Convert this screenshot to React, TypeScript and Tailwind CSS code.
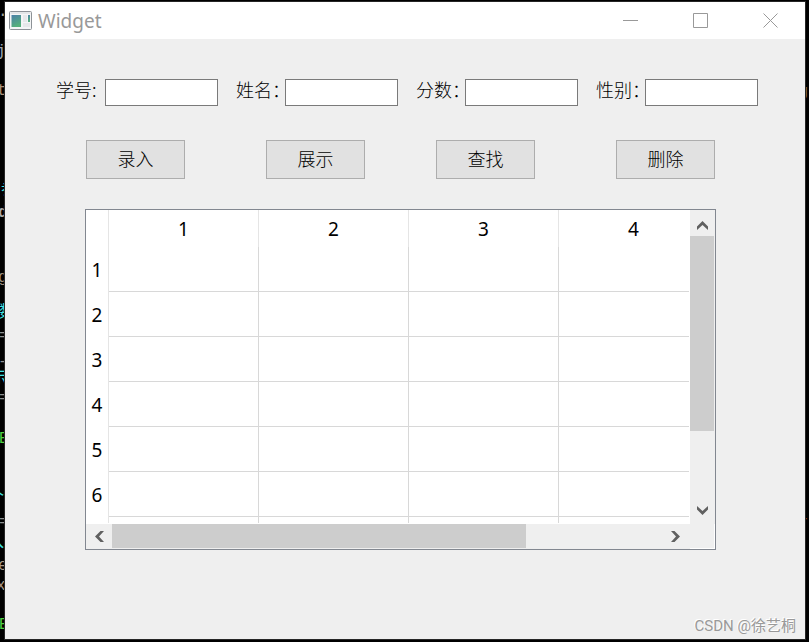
import type { ReactNode } from "react";

const FIELDS = [
  { id: "student-no", label: "学号:" },
  { id: "name", label: "姓名：" },
  { id: "score", label: "分数：" },
  { id: "gender", label: "性别：" },
];

const ACTIONS = ["录入", "展示", "查找", "删除"];

const COLUMNS = ["1", "2", "3", "4"];
const ROWS = ["1", "2", "3", "4", "5", "6", ""];

// Pieces of the editor that is open behind the window
const EDITOR_GLYPHS = [
  { text: ".", place: "left-[-2px] top-[2px]", color: "text-[#a0a0a0]" },
  { text: "j", place: "left-[-4px] top-[42px]", color: "text-[#9aa4b4]" },
  { text: "t", place: "left-[-3px] top-[81px]", color: "text-[#a89078]" },
  { text: "参", place: "left-[1px] top-[180px]", color: "text-[#40e0e0]" },
  { text: "d", place: "left-[-2px] top-[203px] font-bold", color: "text-[#a8a8a8]" },
  { text: "g", place: "left-[-2px] top-[268px]", color: "text-[#9c8c7c]" },
  { text: "数", place: "left-[-1px] top-[303px]", color: "text-[#40e0e0]" },
  { text: "=", place: "left-[-1px] top-[326px]", color: "text-[#909090]" },
  { text: "-", place: "left-[-2px] top-[352px]", color: "text-[#909090]" },
  { text: "示", place: "left-[-9px] top-[369px]", color: "text-[#40e0e0]" },
  { text: "=", place: "left-[-1px] top-[388px]", color: "text-[#909090]" },
  { text: "E", place: "left-[-1px] top-[429px]", color: "text-[#4fd040]" },
  { text: "个", place: "left-[-12px] top-[488px]", color: "text-[#40e0e0]" },
  { text: "=", place: "left-[-1px] top-[512px]", color: "text-[#909090]" },
  { text: "入", place: "left-[-12px] top-[533px]", color: "text-[#40e0e0]" },
  { text: "e", place: "left-[-2px] top-[556px]", color: "text-[#a89888]" },
  { text: "x", place: "left-[-4px] top-[576px]", color: "text-[#a89888]" },
  { text: "E", place: "left-[-1px] top-[615px]", color: "text-[#4fd040]" },
  { text: "g", place: "right-[1px] top-[82px]", color: "text-[#807468]" },
  { text: "r", place: "right-[1px] top-[513px]", color: "text-[#8a4a28]" },
];

export default function App() {
  return (
    <div className="relative flex min-h-screen flex-col overflow-hidden bg-black pb-[3px] pl-[5px] pr-[4px] pt-[2px]">
      <EditorBackdrop />
      <main className="relative flex flex-1 flex-col bg-[#efefef] font-['Noto_Sans','Noto_Sans_CJK_SC',sans-serif] text-black outline outline-[#262626]">
        <TitleBar />
        <EntryForm />
        <ScoreTable />
        <p className="absolute bottom-px right-[9px] font-['Roboto','Noto_Sans_CJK_SC',sans-serif] text-[15px] leading-[24px] text-[#999999] [text-shadow:-1px_-1px_0_#ffffff]">
          CSDN @徐艺桐
        </p>
      </main>
    </div>
  );
}

function EditorBackdrop() {
  return (
    <div
      aria-hidden="true"
      className="absolute inset-0 overflow-hidden font-['Liberation_Mono','Noto_Sans_CJK_SC',monospace] text-[16px] leading-[20px]"
    >
      {EDITOR_GLYPHS.map((glyph) => (
        <span key={glyph.place} className={`absolute ${glyph.place} ${glyph.color}`}>
          {glyph.text}
        </span>
      ))}
    </div>
  );
}

function TitleBar() {
  return (
    <header className="flex h-[37px] items-center bg-white pl-1 text-[#999999]">
      <AppIcon />
      <h1 className="ml-[6px] flex-1 text-[19px] leading-[36px]">Widget</h1>
      <CaptionButton label="Minimize">
        <path d="M0 7.5h15" />
      </CaptionButton>
      <CaptionButton label="Maximize">
        <path d="M.5.5h14v14H.5z" />
      </CaptionButton>
      <CaptionButton label="Close">
        <path d="M.5.5l14 14M14.5.5l-14 14" />
      </CaptionButton>
    </header>
  );
}

function CaptionButton({ label, children }: { label: string; children: ReactNode }) {
  return (
    <button
      type="button"
      aria-label={label}
      className="flex h-full w-[70px] items-center justify-center hover:bg-[#e5e5e5]"
    >
      <svg width="15" height="15" viewBox="0 0 15 15" fill="none" stroke="currentColor">
        {children}
      </svg>
    </button>
  );
}

function AppIcon() {
  return (
    <svg width="23" height="19" viewBox="0 0 23 19" className="shrink-0">
      <defs>
        <linearGradient id="pane" x1="0" y1="0" x2="0.4" y2="1">
          <stop offset="0" stopColor="#4a7fa8" />
          <stop offset="1" stopColor="#55b07c" />
        </linearGradient>
      </defs>
      <rect x=".5" y=".5" width="22" height="18" rx="1" fill="#f4f5f6" stroke="#8d9297" />
      <path d="M1.5 2h20" stroke="#d3d7da" />
      <rect x="2.5" y="4" width="9.5" height="12" fill="url(#pane)" />
      <rect x="14" y="4" width="4" height="7" fill="#e6e8ea" />
      <rect x="14" y="12" width="7" height="4" fill="#e6e8ea" />
      <rect x="19" y="4" width="2" height="7" fill="url(#pane)" />
    </svg>
  );
}

function EntryForm() {
  return (
    <form onSubmit={(event) => event.preventDefault()}>
      <div className="grid grid-cols-4 gap-[18px] pl-[51px] pr-[47px] pt-10">
        {FIELDS.map((field) => (
          <div key={field.id} className="flex items-start">
            <label
              htmlFor={field.id}
              className="w-[49px] shrink-0 whitespace-nowrap font-['Noto_Sans_CJK_SC',sans-serif] text-[18px] font-light leading-5"
            >
              {field.label}
            </label>
            <input
              id={field.id}
              type="text"
              className="relative h-[27px] min-w-0 flex-1 border border-[#7a7a7a] bg-white px-1 text-base outline-none"
            />
          </div>
        ))}
      </div>
      <div className="grid grid-cols-[180fr_170fr_180fr_99px] pl-[81px] pr-[90px] pt-[34px]">
        {ACTIONS.map((action) => (
          <button
            key={action}
            type="button"
            className="h-[39px] w-[99px] border border-[#adadad] bg-[#e1e1e1] pb-0.5 font-['Noto_Sans_CJK_SC',sans-serif] text-[18px] font-light hover:bg-[#e5f1fb]"
          >
            {action}
          </button>
        ))}
      </div>
    </form>
  );
}

function ScoreTable() {
  return (
    <section className="ml-20 mr-[89px] mt-[30px] grid grid-cols-[minmax(0,1fr)_25px] border border-[#828790] bg-[#efefef]">
      <div className="h-[314px] bg-white pb-px pr-px">
        <div className="h-full overflow-hidden">
          <table className="w-[623px] table-fixed border-separate border-spacing-0 text-[19px] leading-6">
            <thead>
              <tr className="h-[37px]">
                <td className="w-[23px] border-r border-[#e5e5e5] p-0" />
                {COLUMNS.map((column) => (
                  <th
                    key={column}
                    scope="col"
                    className="border-r border-[#e5e5e5] p-0 font-normal"
                  >
                    {column}
                  </th>
                ))}
              </tr>
            </thead>
            <tbody>
              {ROWS.map((row, index) => (
                <tr key={index} className="h-[45px]">
                  <th scope="row" className="border-r border-[#e5e5e5] p-0 font-normal">
                    {row}
                  </th>
                  {COLUMNS.map((column) => (
                    <td key={column} className="border-b border-r border-[#d8d8d8] p-0" />
                  ))}
                </tr>
              ))}
            </tbody>
          </table>
        </div>
      </div>

      <div className="flex flex-col">
        <ScrollButton label="Scroll up" size="h-[26px] w-[25px]">
          <path d="M6.5 4L12 9.5V13L6.5 8L1 13V9.5z" />
        </ScrollButton>
        <div className="flex-1">
          <div className="h-[195px] w-6 bg-[#cdcdcd]" />
        </div>
        <ScrollButton label="Scroll down" size="h-[26px] w-[25px]">
          <path d="M6.5 10L12 4.5V1L6.5 6L1 1V4.5z" />
        </ScrollButton>
      </div>

      <div className="flex h-[25px]">
        <ScrollButton label="Scroll left" size="h-[25px] w-[26px]">
          <path d="M2 6.5L7.5 1H11L6 6.5L11 12H7.5z" />
        </ScrollButton>
        <div className="flex-1">
          <div className="h-6 w-3/4 bg-[#cdcdcd]" />
        </div>
        <ScrollButton label="Scroll right" size="h-[25px] w-[26px]">
          <path d="M9 6.5L3.5 1H0L5 6.5L0 12H3.5z" />
        </ScrollButton>
      </div>
      <div className="border-b border-r border-white" />
    </section>
  );
}

function ScrollButton({
  label,
  size,
  children,
}: {
  label: string;
  size: string;
  children: ReactNode;
}) {
  return (
    <button
      type="button"
      aria-label={label}
      className={`flex shrink-0 items-center justify-center text-[#606060] hover:bg-[#dadada] ${size}`}
    >
      <svg width="13" height="13" viewBox="0 0 13 13" fill="currentColor">
        {children}
      </svg>
    </button>
  );
}
